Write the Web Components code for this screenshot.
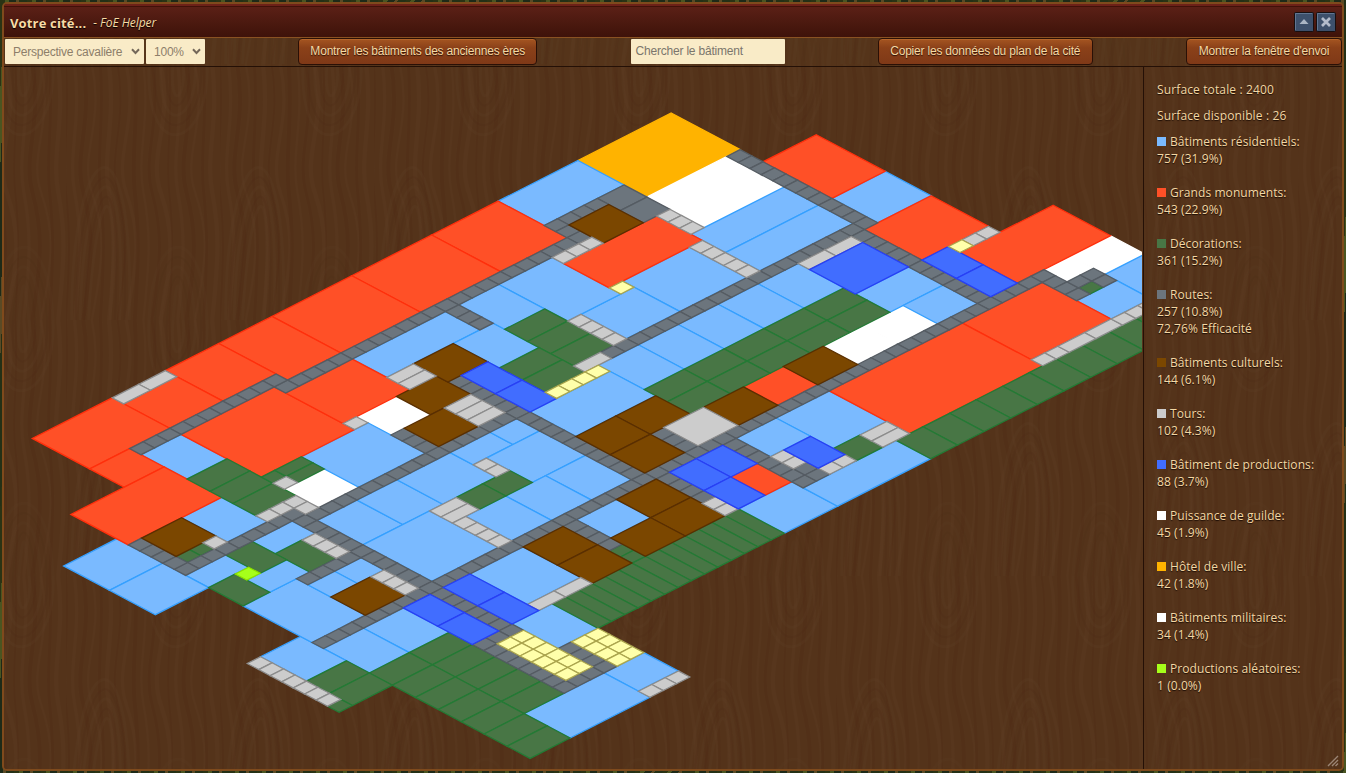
<!DOCTYPE html>
<html lang="fr">
<head>
<meta charset="utf-8">
<title>Votre cité</title>
<style>
html,body{margin:0;height:100%;overflow:hidden}
body{background:#2b3116;font-family:"Open Sans","Noto Sans",sans-serif}
</style>
</head>
<body>
<foe-window>
  <window-header slot="header" heading="Votre cité..." sub="- FoE Helper"></window-header>
  <tool-bar slot="tools">
    <div>
      <select-box style="width:139px">Perspective cavalière</select-box><select-box style="width:59px;margin-left:2px">100%</select-box>
    </div>
    <game-button style="width:239px">Montrer les bâtiments des anciennes ères</game-button>
    <search-box>Chercher le bâtiment</search-box>
    <game-button style="width:215px">Copier les données du plan de la cité</game-button>
    <game-button style="width:156px">Montrer la fenêtre d'envoi</game-button>
  </tool-bar>
  <city-map slot="map"></city-map>
  <city-stats slot="stats">
    <p>Surface totale : 2400</p>
    <p>Surface disponible : 26</p>
    <stat-row color="#7abaff" label="Bâtiments résidentiels:">757 (31.9%)</stat-row>
    <stat-row color="#ff5027" label="Grands monuments:">543 (22.9%)</stat-row>
    <stat-row color="#487645" label="Décorations:">361 (15.2%)</stat-row>
    <stat-row color="#6c757d" label="Routes:">257 (10.8%)<br>72,76% Efficacité</stat-row>
    <stat-row color="#7b4700" label="Bâtiments culturels:">144 (6.1%)</stat-row>
    <stat-row color="#cccccc" label="Tours:">102 (4.3%)</stat-row>
    <stat-row color="#416dff" label="Bâtiment de productions:">88 (3.7%)</stat-row>
    <stat-row color="#ffffff" label="Puissance de guilde:">45 (1.9%)</stat-row>
    <stat-row color="#ffb300" label="Hôtel de ville:">42 (1.8%)</stat-row>
    <stat-row color="#ffffff" label="Bâtiments militaires:">34 (1.4%)</stat-row>
    <stat-row color="#a6ff1a" label="Productions aléatoires:">1 (0.0%)</stat-row>
  </city-stats>
</foe-window>

<script>
const define = (name, html, setup) => {
  const t = document.createElement('template');
  t.innerHTML = html;
  customElements.define(name, class extends HTMLElement {
    connectedCallback() {
      if (this.shadowRoot) return;
      const root = this.attachShadow({mode: 'open'});
      root.append(t.content.cloneNode(true));
      if (setup) setup(this, root);
    }
  });
};

define('foe-window', `
<style>
:host{display:block;height:773px;box-sizing:border-box;padding:2px 2px 2px 2px;
 background:repeating-linear-gradient(93deg,#2a3314 0 5px,#4a5521 5px 9px,#1d2a18 9px 16px,#5a4a25 16px 19px,#233016 19px 27px)}
.frame{position:relative;height:769px;box-sizing:border-box;border:2px solid #7f4a1c;border-radius:5px;
 display:grid;grid-template-rows:34px 29px 1fr;overflow:hidden;background:#54331a}
.wood{position:absolute;inset:0;width:100%;height:100%}
slot{display:contents}
.body{position:relative;display:grid;grid-template-columns:1fr 199px;min-height:0}
.grip{position:absolute;right:3px;bottom:2px}
</style>
<div class="frame">
 <svg class="wood" aria-hidden="true"><defs><pattern id="w" width="154" height="256" patternUnits="userSpaceOnUse" x="-92" y="60"></pattern></defs>
 <rect width="100%" height="100%" fill="url(#w)"/></svg>
 <slot name="header"></slot>
 <slot name="tools"></slot>
 <div class="body"><slot name="map"></slot><slot name="stats"></slot></div>
 <svg class="grip" width="12" height="12" stroke="#9b8574" stroke-width="1.4"><path d="M1 11L11 1M5 11L11 5M8.500 11L11 8.500"/></svg>
</div>`, (el, root) => {
  // wood grain: long wavy fibres with hanging U rings and rising arches
  let s = '<rect width="154" height="256" fill="#54331a"/>';
  const line = (d, c, w, o) => { s += `<path d="${d}" fill="none" stroke="${c}" stroke-width="${w}" opacity="${o}"/>`; };
  for (let i = 0; i < 18; i++) {
    const x = i * 8.600, a = 4 + (i % 4) * 3;
    line(`M${x} 0C${x + a} 60 ${x - a} 90 ${x} 128S${x + a} 190 ${x} 256`, i % 2 ? '#5d3c25' : '#4a2912', 2 + i % 3, .28);
  }
  for (let i = 0; i < 5; i++) {
    const c = i % 2 ? '#4a2912' : '#603f28', r = 5 + i * 6;
    line(`M${112 - r} 0C${108 - r} ${50 + i * 14} ${116 + r} ${34 + i * 12} ${112 + r} 0`, c, 2.500, .2);
    line(`M${112 - r} 256C${116 - r} ${206 - i * 12} ${108 + r} ${216 - i * 14} ${112 + r} 256`, c, 2.500, .16);
    line(`M${26 - r * .7} 256C${34 - r} ${125 - i * 14} ${52 + r * .6} ${85 - i * 12} ${40 + r * .8} 256`, c, 2.500, .2);
  }
  root.querySelector('pattern').innerHTML = s;
});

define('window-header', `
<style>
:host{position:relative;display:flex;align-items:center;box-sizing:border-box;border-top:2px solid #6d2118;border-bottom:1px solid #8a5222;
 background:linear-gradient(#5c2017,#4b190f 55%,#3e120a);padding:0 6px;color:#f7dba6;box-shadow:inset 0 1px #411109}
b{font-size:13px;letter-spacing:.16px;padding-top:2px;text-shadow:0 1px 1px #000}
i{font-size:12px;letter-spacing:-.05px;padding-top:2px;margin-left:7px;flex:1;text-shadow:0 1px 1px #000}
svg{margin-left:2px}
</style>
<b></b><i></i>
<svg width="20" height="20"><rect x=".5" y=".5" width="19" height="19" rx="1" fill="#3d506b" stroke="#180f10"/><path d="M1.500 18V1.500H18" fill="none" stroke="#607692"/><path d="M5.500 12L10 7L14.500 12Z" fill="#aab5c4"/></svg>
<svg width="20" height="20"><rect x=".5" y=".5" width="19" height="19" rx="1" fill="#3d506b" stroke="#180f10"/><path d="M1.500 18V1.500H18" fill="none" stroke="#607692"/><path d="M6 6L14 14M14 6L6 14" stroke="#b3bccb" stroke-width="2.700"/></svg>
`, (el, root) => {
  root.querySelector('b').textContent = el.getAttribute('heading');
  root.querySelector('i').textContent = el.getAttribute('sub');
});

define('tool-bar', `
<style>
:host{position:relative;display:flex;justify-content:space-between;align-items:flex-start;border-bottom:1px solid #241006;box-sizing:border-box;background:#5b3a1c33;padding:0 0 0 1px}
::slotted(div){display:flex}
</style><slot></slot>`);

define('select-box', `
<style>
:host{display:flex;box-sizing:border-box;height:25px;margin-top:1px;align-items:center;justify-content:space-between;background:#f9ebc7;color:#8d7e6a;
 font:12px "Liberation Sans",sans-serif;padding:0 4px 0 8px;border-radius:1px;white-space:nowrap}
span{letter-spacing:-.23px}
</style><span><slot></slot></span><svg width="9" height="7" fill="none" stroke="#74685a" stroke-width="2"><path d="M1 1.300L4.500 5L8 1.300"/></svg>`);

define('search-box', `
<style>
:host{display:block;box-sizing:border-box;width:154px;height:25px;margin-top:1px;background:#f9ebc7;color:#7b766c;
 font:12px/24px "Liberation Sans",sans-serif;letter-spacing:-.2px;padding-left:5px;border-radius:1px}
</style><slot></slot>`);

define('game-button', `
<style>
:host{display:block;box-sizing:border-box;height:27px;border:1px solid #2a1006;border-radius:4px;
 background:linear-gradient(#a55521,#8b4119 35%,#7f3917);color:#f5d9a5;text-align:center;
 font:12px/24px "Liberation Sans",sans-serif;letter-spacing:-.2px;text-shadow:0 1px 1px #2a1006;white-space:nowrap;box-shadow:inset 0 1px #b5652b}
</style><slot></slot>`);

define('city-stats', `
<style>
:host{display:block;border-left:1px solid #241006;padding:14px 0 0 13px;color:#f3d8a5;font-size:12px;line-height:17px;text-shadow:0 1px 1px #1b0c04}
::slotted(p){margin:0 0 9px;letter-spacing:.13px}
</style><slot></slot>`);

define('stat-row', `
<style>
:host{display:block;margin-bottom:17px;white-space:nowrap;letter-spacing:.08px}
i{display:inline-block;width:9px;height:9px;margin-right:4px}
</style><i></i><span></span><br><slot></slot>`, (el, root) => {
  root.querySelector('i').style.background = el.getAttribute('color');
  root.querySelector('span').textContent = el.getAttribute('label');
});

// Tile groups: "u v width height" on the city grid;
// u runs to the lower right, v to the lower left. "/n m" repeats the tile n times along u and m along v.
const CITY = {
 hall: '0 0 6 7',
 white: `12 31 3 3;6 1 5 6;26 5 3 3/1 2;29 -5 2 2;29 -8 3 3;15 39 3 3`,
 res: `0 7 4 6;6 42 4 3;7 23 3 7;10 22 4 3;11 1 3 7;14 1 3 7;14 -4 4 4;23 2 3 4;26 2 3 3;32 -8 4 3;33 -5 3 3;
  30 14 5 4;30 18 3 3;36 22 4 4;37 15 3 7;18 6 4 3/1 5;19 21 4 6;30 30 3 3;30 37 5 4;36 40 4 3;44 40 3 3;44 43 4 6;
  30 46 4 3;30 49 4 3;28 52 4 3;23 48 6 4;24 44 2 2;24 46 2 2;18 44 2 3;21 47 2 3;18 49 2 3;12 52 4 4;16 52 4 4;
  13 45 4 3;13 34 5 5;19 40 4 3;19 37 4 3;19 33 4 4;19 30 2 3;19 28 2 2;21 28 4 4;25 28 4 3;25 31 4 3;25 34 4 3;
  23 38 6 5;12 9 5 5;13 14 4 4;7 15 6 4;7 19 4 3`,
 gb: `0 13 6 5;0 18 6 6;0 24 6 6;0 30 6 4;0 34 5 4;1 38 4 4;0 42 5 6;5 45 3 3;8 45 5 7;6 35 7 7;7 30 5 5;8 8 4 7;
  8 -4 6 4;18 -4 5 5;24 -8 5 7;30 -2 6 6;30 4 7 10;33 22 3 2;26 14 3 3`,
 deco: `11 19 2 3/3 1;14 22 2 3/2 1;22 6 2 3/2 5;32 -4 1 1;37 -7 3 2/1 11;36 26 4 1/1 14;34 33 1 1/2 1;
  34 46 2 3/5 1;34 49 2 3/7 1;32 52 2 3/2 1;35 55 1 1;20 45 3 2;18 47 3 2;20 50 3 2;16 49 1 1/1 2;10 42 2 3/3 1;
  13 41 1 1;13 39 1 2/2 1;23 32 2 2/1 2;35 16 2 2`,
 road: `6 0 1 1/12 1;17 1 1 1/1 19;18 1 1 1/11 1;29 -3 1 1/1 55;30 -3 1 1/3 1;31 -4 1 1;31 -5 1 1/2 1;
  4 7 2 2/2 1;4 9 1 1/1 4;5 12 1 1/2 1;6 13 1 1/1 22;5 34 1 1/1 11;7 22 1 1/3 1;13 27 1 1/16 1;26 23 1 1/3 1;
  30 26 1 1/4 1;30 21 1 1/7 1;35 20 1 1/2 1;30 33 1 1/4 1;17 43 1 1/20 1;36 44 1 1/1 2;37 45 1 1/7 1;43 43 1 1/1 2;40 42 1 1/4 1;
  18 28 1 1/1 15;15 33 1 1/3 1;23 44 1 1/1 4;17 44 1 1/1 8;13 51 1 1/4 1`,
 cult: `5 9 3 3;12 28 3 3;10 25 3 3;15 30 3 3;26 17 3 3;26 11 3 3;23 21 3 3/1 2;26 24 3 3;30 27 3 3/2 1;33 30 3 3;
  30 34 3 3/2 1;26 45 3 3;13 48 3 3`,
 tower: `0 38 1 2/1 2;12 34 1 1;10 28 1 2/2 1;17 20 1 2;13 18 1 1/4 1;7 12 1 1/1 3;8 7 1 1/3 1;12 8 1 1/5 1;18 2 1 2/1 2;
  23 -4 1 1/1 2;36 2 1 1/1 2;36 -2 1 2/1 2;36 -3 1 1;36 -4 1 1;36 -5 1 1;33 20 1 1/2 1;36 18 1 1/1 2;35 14 1 2/2 1;26 20 3 3;34 26 1 1/2 1;
  35 37 1 2/1 2;47 40 1 1/1 3;28 55 1 1/7 1;26 44 1 1/3 1;20 44 1 1/3 1;16 48 1 1;14 41 1 1;16 42 1 1/1 3;17 42 1 1;
  21 32 1 1/2 1;23 36 1 2/2 1;25 37 1 1/4 1;15 28 1 2/3 1`,
 prod: `13 25 3 2/2 1;19 2 4 4;23 -1 3 2/2 1;33 18 3 2;30 22 3 2/1 2;33 24 3 2;30 41 3 2/2 1;30 44 3 2/2 1`,
 yellow: `18 21 1 1/1 4;12 14 1 1;23 -2 1 1;40 40 1 1/4 2;37 43 1 1/6 2`,
 lime: '20 49 1 1'
};
define('city-map', `
<style>
:host{display:block;min-width:0;overflow:hidden}
svg{display:block}
polygon{stroke-width:1.3;stroke-linejoin:miter}
.hall{fill:#ffb300;stroke:#ffb300}.res{fill:#7abaff;stroke:#35a0ff}.gb{fill:#ff5027;stroke:#ff2f0c}
.deco{fill:#487645;stroke:#247a35}.road{fill:#6c757d;stroke:#555c63}.cult{fill:#7b4700;stroke:#5a2f00}
.tower{fill:#ccc;stroke:#8c8c8c}.prod{fill:#416dff;stroke:#2840f4}.white{fill:#fff;stroke:#fff}
.yellow{fill:#ffffaa;stroke:#aba54e}.lime{fill:#a6ff1a;stroke:#8fe000}
</style><svg width="1138" height="702" viewBox="4 67 1138 702"></svg>`, (el, root) => {
  const at = (u, v) => (671.2 + u * 11.48 - v * 13.31).toFixed(1) + ',' + (113 + u * 6.1 + v * 6.78).toFixed(1);
  let out = '';
  for (const [kind, list] of Object.entries(CITY))
    for (const item of list.split(';')) {
      const [pos, rep] = item.trim().split('/');
      const [u, v, w, h] = pos.split(' ').map(Number);
      const [n, m] = rep ? rep.split(' ').map(Number) : [1, 1];
      for (let i = 0; i < n; i++) for (let j = 0; j < m; j++) {
        const a = u + i * w, b = v + j * h;
        out += `<polygon class="${kind}" points="${at(a, b)} ${at(a + w, b)} ${at(a + w, b + h)} ${at(a, b + h)}"/>`;
      }
    }
  root.querySelector('svg').innerHTML = out;
});
</script>
</body>
</html>
